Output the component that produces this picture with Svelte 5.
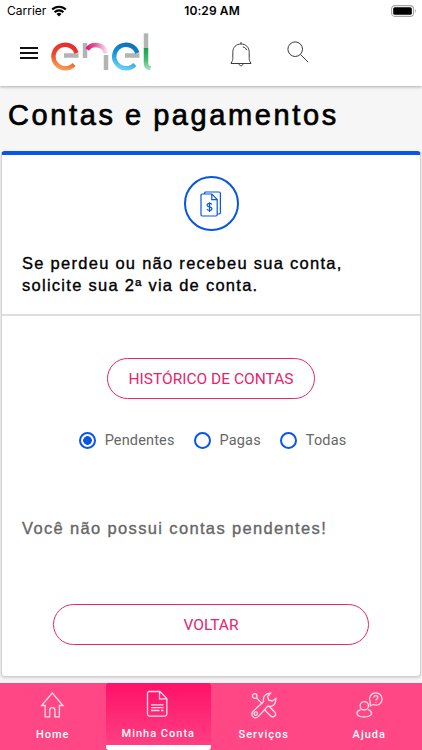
<script lang="ts">
	type Filter = 'pendentes' | 'pagas' | 'todas';

	const filters: { value: Filter; label: string }[] = [
		{ value: 'pendentes', label: 'Pendentes' },
		{ value: 'pagas', label: 'Pagas' },
		{ value: 'todas', label: 'Todas' }
	];

	const tabs = [
		{ id: 'home', label: 'Home' },
		{ id: 'conta', label: 'Minha Conta' },
		{ id: 'servicos', label: 'Serviços' },
		{ id: 'ajuda', label: 'Ajuda' }
	];

	let selected = $state<Filter>('pendentes');
	let activeTab = $state('conta');
</script>

<div class="app">
	<header>
		<div class="status-bar">
			<div class="carrier">
				<span>Carrier</span>
				<svg width="16" height="12" viewBox="0 0 16 12">
					<path d="M1.2 4.5a9.6 9.6 0 0 1 13.6 0" />
					<path d="M3.6 7.2a6.2 6.2 0 0 1 8.8 0" />
					<path class="dot" d="M8 11.6 5.5 9a3.5 3.5 0 0 1 5 0z" />
				</svg>
			</div>
			<div class="clock">10:29 AM</div>
			<div class="battery">
				<svg width="26" height="12" viewBox="0 0 26 12">
					<rect x=".6" y=".6" width="21.8" height="10.8" rx="3.2" fill="none" stroke="#a6a6a6" stroke-width="1.1" />
					<rect x="2.2" y="2.2" width="18.6" height="7.6" rx="1.6" fill="#000" />
					<path d="M23.9 4v4c1.2-.5 1.2-3.5 0-4z" fill="#a6a6a6" />
				</svg>
			</div>
		</div>

		<div class="toolbar">
			<button class="menu" aria-label="Menu">
				<span></span><span></span><span></span>
			</button>
			<svg class="logo" width="102" height="40" viewBox="0 0 102 40" role="img" aria-label="enel">
				<defs>
					<linearGradient id="red" x1=".7" y1="0" x2=".4" y2="1">
						<stop offset="0" stop-color="#e62e2b" />
						<stop offset=".55" stop-color="#ea4a2c" />
						<stop offset="1" stop-color="#f39a52" />
					</linearGradient>
					<linearGradient id="fade" x1="0" y1="0" x2="1" y2="0">
						<stop offset="0" stop-color="#dc1f7b" />
						<stop offset=".4" stop-color="#e2549a" />
						<stop offset="1" stop-color="#f9dbe9" />
					</linearGradient>
					<linearGradient id="blue" x1=".7" y1="0" x2=".4" y2="1">
						<stop offset="0" stop-color="#0b73bb" />
						<stop offset=".5" stop-color="#1793d6" />
						<stop offset="1" stop-color="#63cdf4" />
					</linearGradient>
					<linearGradient id="green" x1="0" y1="0" x2="0" y2="1">
						<stop offset="0" stop-color="#18a14b" />
						<stop offset=".5" stop-color="#43b873" />
						<stop offset="1" stop-color="#b5e2c4" />
					</linearGradient>
				</defs>
				<path d="M13 23.4h14.5M74 23.4h14.5" />
				<path d="M34 11v15M55 23v15" />
				<path d="M95 1.3v15" />
				<path d="M25.5 21A11.8 11.8 0 1 0 23 32.4" style:stroke="url(#red)" />
				<path d="M36.200 17.500c4.300-6.300 17.300-6.500 18.800 4" style:stroke="url(#fade)" />
				<path d="M86.300 21A11.800 11.800 0 1 0 83.800 32.400" style:stroke="url(#blue)" />
				<path class="tail" d="M92.750 16h4.500v14.500c0 2.400.8 3.400 2.900 3.800l-.9 3.900c-4.500-.5-6.500-3-6.500-7.300z" />
			</svg>
			<svg class="bell" width="22" height="28" viewBox="0 0 22 28">
				<path d="M11 1v2M1 22.500h20l-1-2c-.8-1.500-.8-2.500-.8-4v-5.200C19.200 6 15.600 3 11 3s-8.200 3-8.200 8.300v5.200c0 1.500 0 2.500-.8 4z" />
				<path d="M12.800 6c2 .2 3.400 1.400 3.800 3.200M9 22.700c.2 2.800 3.800 2.800 4 0" />
			</svg>
			<svg class="search" width="22" height="22" viewBox="0 0 22 22">
				<circle cx="8.2" cy="8.2" r="7.3" />
				<path d="m13.400 13.400 7.800 7.800" />
			</svg>
		</div>
	</header>

	<h1>Contas e pagamentos</h1>

	<main class="card">
		<section class="intro">
			<div class="badge">
				<svg width="22" height="26" viewBox="0 0 22 26">
					<path d="M4.600 3V2c0-.7.3-1 1-1H19c.9 0 1.400.5 1.400 1.400v19.200c0 .9-.5 1.400-1.400 1.400h-1.800" />
					<path d="M2.200 3h9.600l5.400 5.400v15.400c0 .8-.4 1.200-1.200 1.200H2.200C1.400 25 1 24.600 1 23.800V4.200C1 3.400 1.400 3 2.200 3zM11.800 3v5.600h5.400" />
					<path d="M11.800 13.400c-1-1.600-4.800-1.500-4.800.6 0 2.400 5 1.200 5 3.700 0 2.200-4.100 2.200-5.100.6M9.500 11.200v9.800" />
				</svg>
			</div>
			<p>Se perdeu ou não recebeu sua conta, solicite sua 2ª via de conta.</p>
		</section>

		<section class="bills">
			<button class="pill history">HISTÓRICO DE CONTAS</button>

			<div class="filters">
				{#each filters as filter (filter.value)}
					<label>
						<input type="radio" name="filter" value={filter.value} bind:group={selected} />
						<span>{filter.label}</span>
					</label>
				{/each}
			</div>

			<p class="empty">Você não possui contas pendentes!</p>

			<button class="pill back">VOLTAR</button>
		</section>
	</main>

	<nav>
		{#each tabs as tab (tab.id)}
			<button class="tab" class:active={activeTab === tab.id} onclick={() => (activeTab = tab.id)}>
				<svg width="28" height="28" viewBox="0 0 28 28">
					{#if tab.id === 'home'}
						<path d="M13.300 2 2.600 14.500h3.600v11.300h4.500v-6.600c0-3.500 5.200-3.500 5.200 0v6.600h4.500V14.500H24z" />
					{:else if tab.id === 'conta'}
						<path d="M5.300 1.500h10.500l7 7v15.800c0 1.200-.6 1.800-1.800 1.800H5.300c-1.200 0-1.800-.6-1.800-1.800v-21c0-1.200.6-1.800 1.800-1.800zM15.500 1.700v7.100h7" />
						<path d="M7 14.800h12.500M7 17.700h12.500M7 20.500h8.500M17 20.500h2.500" />
					{:else if tab.id === 'servicos'}
						<circle cx="4.7" cy="5" r="2.3" />
						<path d="m6.400 6.700 6 6.200" />
						<path d="M20.500 2.200c-5.500.3-8 3.900-6.800 8.400L3.200 20.200c-4 4 1.800 8.800 5.200 5.200l9.500-10.300c4.500 1.400 8.300-1.900 8-7.700l-3.500 2.600-3.600-.8-1.200-3.600z" />
						<circle cx="5.8" cy="22.6" r="1.7" />
						<path d="m14.500 18.700 6.700 6.700c2.800 1.500 5.600-1.100 3.900-3.900l-6-6.300" />
					{:else}
						<circle cx="9.3" cy="14.8" r="4.2" />
						<path d="M5.700 18.700c-2.400.8-3.700 1.900-3.700 3.500 0 5 14.600 5 14.600 0 0-1.600-1.300-2.700-3.700-3.500" />
						<path d="M15.200 14.800l-.1-4.300c-1.800-4 1-8.700 5.500-8.700 3.600 0 6.400 2.700 6.400 6.200 0 4.600-4.500 7.400-8.400 5.500z" />
						<path d="M18.900 6.500c0-2.600 4-2.500 3.900 0-.1 1.500-1.900 1.500-1.900 3.100M20.900 11v.8" />
					{/if}
				</svg>
				<span>{tab.label}</span>
			</button>
		{/each}
	</nav>
</div>

<style>
	:global(body) {
		margin: 0;
		background: #f7f7f7;
	}

	.app {
		height: 750px;
		display: flex;
		flex-direction: column;
		overflow: hidden;
		background: #f6f6f6;
		font-family: Roboto, 'Liberation Sans', sans-serif;
	}

	button {
		font-family: inherit;
		padding: 0;
		border: 0;
		background: none;
		cursor: pointer;
	}

	svg {
		display: block;
		flex-shrink: 0;
	}

	header {
		height: 86px;
		flex-shrink: 0;
		background: #fff;
		box-shadow: 0 1px 3px rgba(0, 0, 0, 0.3);
	}

	.status-bar {
		display: grid;
		grid-template-columns: 1fr auto 1fr;
		align-items: center;
		height: 22px;
		padding: 0 5px 0 7px;
		font-family: Inter, sans-serif;
		font-size: 12px;
		line-height: 22px;
	}

	.carrier {
		display: flex;
		align-items: center;
		gap: 5px;
	}

	.carrier path {
		fill: none;
		stroke: #000;
		stroke-width: 2.1;
	}

	.carrier .dot {
		fill: #000;
		stroke: none;
	}

	.clock {
		font-weight: 600;
		letter-spacing: 0.1px;
	}

	.battery {
		justify-self: end;
	}

	.toolbar {
		display: flex;
		align-items: flex-start;
		padding: 9px 0 0 20px;
	}

	.menu {
		display: flex;
		flex-direction: column;
		gap: 3px;
		width: 18px;
		margin: 16px 13px 0 0;
	}

	.menu span {
		height: 2px;
		background: #111;
	}

	.logo {
		margin-top: 0.5px;
	}

	.logo path {
		fill: none;
		stroke: #b3b4b4;
		stroke-width: 4.5;
	}

	.logo .tail {
		fill: url(#green);
		stroke: none;
	}

	.bell,
	.search {
		fill: none;
		stroke: #3c3c3c;
		stroke-width: 1;
	}

	.bell {
		margin: 10px 0 0 77px;
	}

	.search {
		margin: 10px 0 0 35px;
	}

	h1,
	.intro p,
	.empty {
		font-family: 'Liberation Sans', Arial, sans-serif;
		font-weight: 400;
		-webkit-text-stroke: 0.35px currentColor;
	}

	h1 {
		margin: 0;
		padding: 11px 0 0 8px;
		height: 54px;
		font-size: 29px;
		line-height: 36px;
		letter-spacing: 2.6px;
		word-spacing: -1.2px;
		white-space: nowrap;
		-webkit-text-stroke-width: 0.7px;
	}

	.card {
		box-sizing: border-box;
		height: 526px;
		flex-shrink: 0;
		margin: 0 1px;
		border: 1px solid #d2d2d2;
		border-top: 4px solid #0855e8;
		border-radius: 4px;
		background: #fff;
		box-shadow: 0 1px 3px rgba(0, 0, 0, 0.15);
	}

	.intro {
		display: flex;
		flex-direction: column;
		align-items: center;
		box-sizing: border-box;
		height: 161px;
		padding: 21px 20px 0;
		border-bottom: 2px solid #dedede;
	}

	.badge {
		box-sizing: border-box;
		width: 55px;
		height: 55px;
		display: grid;
		place-items: center;
		border: 2px solid #0855e0;
		border-radius: 50%;
	}

	.badge svg {
		fill: none;
		stroke: #0855e0;
		stroke-width: 1.2;
	}

	.intro p {
		align-self: stretch;
		margin: 21px 0 0;
		font-size: 16.5px;
		line-height: 22px;
		letter-spacing: 1.27px;
	}

	.bills {
		display: flex;
		flex-direction: column;
		align-items: center;
		padding: 42px 20px 0;
	}

	.pill {
		box-sizing: border-box;
		height: 41px;
		border: 1px solid #e5256d;
		border-radius: 21px;
		color: #e5256d;
		font-size: 15.5px;
	}

	.history {
		width: 208px;
	}

	.back {
		width: 316px;
	}

	.filters {
		display: flex;
		gap: 19px;
		margin: 31px 0 0 3px;
	}

	label {
		display: flex;
		align-items: center;
		gap: 9px;
		color: #666;
		font-size: 14.5px;
		line-height: 21px;
		letter-spacing: 0.15px;
	}

	input {
		appearance: none;
		box-sizing: border-box;
		width: 17px;
		height: 17px;
		margin: 0;
		border: 2px solid #0855e8;
		border-radius: 50%;
	}

	input:checked {
		background: radial-gradient(circle, #0855e8 4px, transparent 4.6px);
	}

	.empty {
		align-self: stretch;
		margin: 66px 0 0;
		color: #666;
		font-size: 16.5px;
		line-height: 22px;
		letter-spacing: 1.35px;
	}

	.back {
		margin-top: 65px;
	}

	nav {
		display: grid;
		grid-template-columns: repeat(4, 1fr);
		height: 67px;
		flex-shrink: 0;
		margin-top: auto;
		background: #ff4785;
	}

	.tab {
		box-sizing: border-box;
		display: flex;
		flex-direction: column;
		align-items: center;
		padding-top: 8px;
		color: #fff;
		font-size: 11px;
		line-height: 14px;
		font-weight: 500;
		letter-spacing: 1px;
	}

	.tab svg {
		fill: none;
		stroke: #ffdce8;
		stroke-width: 1.3;
	}

	.tab span {
		margin-top: 9px;
	}

	.tab.active {
		padding-top: 7px;
		border-bottom: 5px solid #fff;
		border-radius: 3px;
		background: linear-gradient(#ff1168, #ff3f81);
	}
</style>
